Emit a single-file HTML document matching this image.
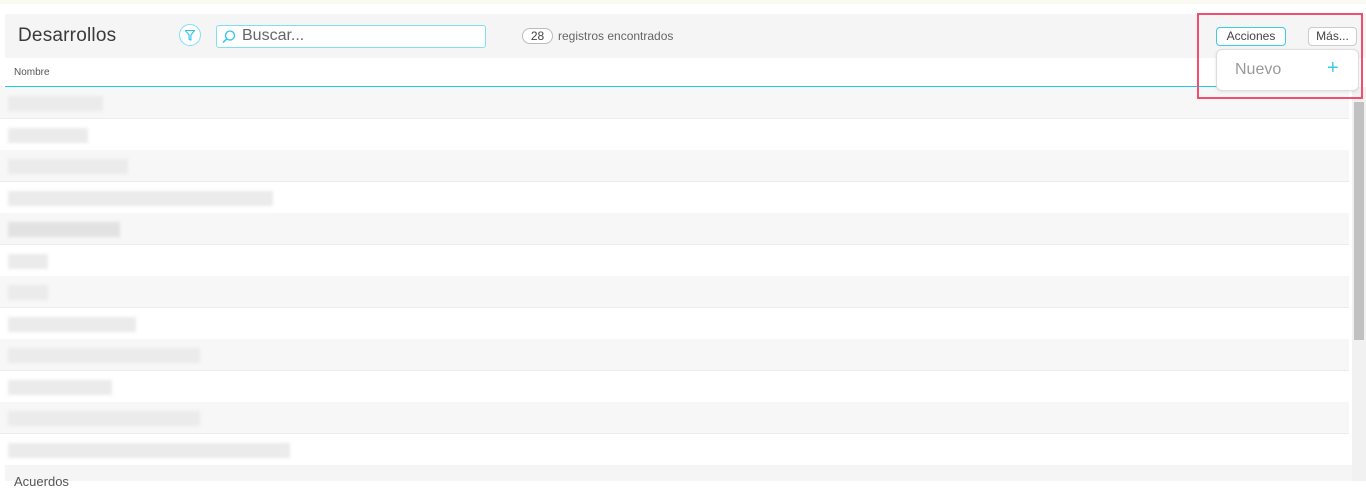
<!DOCTYPE html>
<html><head><meta charset="utf-8"><style>
*{margin:0;padding:0;box-sizing:border-box}
body{width:1366px;height:481px;overflow:hidden;background:#fff;font-family:"Liberation Sans",sans-serif;position:relative}
.top{position:absolute;left:0;top:0;width:1366px;height:4px;background:#fafaf2}
.hdr{position:absolute;left:5px;top:14px;width:1361px;height:44px;background:#f5f5f5}
.title{position:absolute;left:18px;top:25px;font-size:19px;color:#3a3a3a;letter-spacing:.2px}
.filt{position:absolute;left:179px;top:24px;width:22px;height:22px;border:1px solid #7fe0f5;border-radius:50%;background:#fff}
.search{position:absolute;left:216px;top:25px;width:270px;height:23px;border:1px solid #7fe0f5;border-radius:3px;background:#fff}
.search span{position:absolute;left:25px;top:1px;font-size:16px;color:#666}
.cnt{position:absolute;left:522px;top:28px;width:31px;height:16px;border:1px solid #bbb;border-radius:8px;font-size:12px;color:#444;text-align:center;line-height:14px;background:#fff}
.reg{position:absolute;left:558px;top:29px;font-size:12px;color:#666}
.btn{position:absolute;top:27px;height:19px;border-radius:4px;background:#fff;font-size:12px;color:#444;text-align:center;line-height:17px}
.col{position:absolute;left:14px;top:67px;font-size:10px;color:#555}
.line{position:absolute;left:5px;top:86px;width:1344px;height:1px;background:#1fc8ec}
.row{position:absolute;left:0;width:1349px;height:31px}
.g{background:#f7f7f7}
.w{background:#fff;border-top:1px solid #ececec}
.bar{position:absolute;left:8px;top:9px;height:15px;background:#ebebeb;filter:blur(1.5px)}
.track{position:absolute;left:1352px;top:87px;width:14px;height:394px;background:#f1f1f1}
.thumb{position:absolute;left:1354px;top:102px;width:10px;height:238px;background:#c1c1c1}
.drop{position:absolute;left:1216px;top:49px;width:143px;height:42px;background:#fff;border:1px solid #ddd;border-radius:6px;box-shadow:0 1px 3px rgba(0,0,0,.1)}
.hl{position:absolute;left:1197px;top:13px;width:166px;height:86px;border:2px solid #f0506e}
.acu{position:absolute;left:5px;top:465px;width:1347px;height:16px;background:#f5f5f5}
.acu span{position:absolute;left:9px;top:9px;font-size:13px;color:#555}
</style></head><body>
<div class="top"></div>
<div class="hdr"></div>
<div class="title">Desarrollos</div>
<div class="filt"><svg width="20" height="20" viewBox="0 0 20 20" style="position:absolute;left:0;top:0"><path d="M5.5 5.5h9l-3.6 4.6v5l-1.8-0.9v-4.1z" fill="none" stroke="#2cc4e8" stroke-width="1.1" stroke-linejoin="round"/></svg></div>
<div class="search"><svg width="18" height="18" viewBox="0 0 18 18" style="position:absolute;left:3px;top:2px"><circle cx="10" cy="7.5" r="4.5" fill="none" stroke="#2cc4e8" stroke-width="1.3"/><path d="M6.8 10.8L3 14.5" stroke="#2cc4e8" stroke-width="1.5"/></svg><span>Buscar...</span></div>
<div class="cnt">28</div>
<div class="reg">registros encontrados</div>
<div class="btn" style="left:1216px;width:70px;border:1px solid #3ccbea">Acciones</div>
<div class="btn" style="left:1308px;width:49px;border:1px solid #ccc">Más...</div>
<div class="col">Nombre</div>
<div class="line"></div>

<div class="row g" style="top:87px"><div class="bar" style="width:95px"></div></div>
<div class="row w" style="top:118px"><div class="bar" style="width:80px"></div></div>
<div class="row g" style="top:150px"><div class="bar" style="width:120px"></div></div>
<div class="row w" style="top:181px"><div class="bar" style="width:265px"></div></div>
<div class="row g" style="top:213px"><div class="bar" style="width:112px;background:#e2e2e2"></div></div>
<div class="row w" style="top:244px"><div class="bar" style="width:40px"></div></div>
<div class="row g" style="top:276px"><div class="bar" style="width:40px"></div></div>
<div class="row w" style="top:307px"><div class="bar" style="width:128px"></div></div>
<div class="row g" style="top:339px"><div class="bar" style="width:192px"></div></div>
<div class="row w" style="top:370px"><div class="bar" style="width:104px"></div></div>
<div class="row g" style="top:402px"><div class="bar" style="width:192px"></div></div>
<div class="row w" style="top:433px"><div class="bar" style="width:282px"></div></div>
<div class="acu"><span>Acuerdos</span></div>

<div class="track"></div>
<div class="thumb"></div>

<div class="drop"><span style="position:absolute;left:18px;top:11px;font-size:16px;color:#999">Nuevo</span><span style="position:absolute;left:110px;top:7px;font-size:20px;color:#3ccbea;font-weight:300">+</span></div>
<div class="hl"></div>
</body></html>
